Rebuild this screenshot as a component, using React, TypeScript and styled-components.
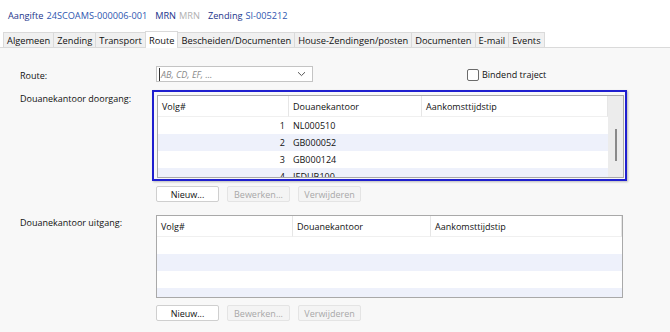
import styled, { createGlobalStyle } from "styled-components";

const GlobalStyle = createGlobalStyle`
  html, body {
    margin: 0;
    padding: 0;
    background: #ffffff;
  }
  body {
    font-family: "Open Sans", "Noto Sans", Arial, sans-serif;
    font-size: 9px;
    color: #1a1a1a;
  }
`;

type Row = { volg: number; kantoor: string };

const DOORGANG: Row[] = [
  { volg: 1, kantoor: "NL000510" },
  { volg: 2, kantoor: "GB000052" },
  { volg: 3, kantoor: "GB000124" },
  { volg: 4, kantoor: "IEDUB100" },
];

const TABS = [
  "Algemeen",
  "Zending",
  "Transport",
  "Route",
  "Bescheiden/Documenten",
  "House-Zendingen/posten",
  "Documenten",
  "E-mail",
  "Events",
];

const ChevronDown = () => (
  <svg width="9" height="6" viewBox="0 0 9 6">
    <path d="M1 1.2 L4.5 4.6 L8 1.2" fill="none" stroke="#555" strokeWidth="1" />
  </svg>
);

type GridProps = {
  rows: Row[];
  columns: string;
  scroll?: boolean;
};

const DataGrid = ({ rows, columns, scroll }: GridProps) => {
  const filled = [...rows];
  while (filled.length < 4) filled.push({ volg: 0, kantoor: "" });
  return (
    <GridFrame>
      <GridBody $columns={columns}>
        <HeadCell>Volg#</HeadCell>
        <HeadCell>Douanekantoor</HeadCell>
        <HeadCell>Aankomsttijdstip</HeadCell>
        {scroll && <ScrollHead />}
        {filled.map((r, i) => (
          <RowGroup key={i}>
            <Cell $alt={i % 2 === 1} $right>
              {r.volg || ""}
            </Cell>
            <Cell $alt={i % 2 === 1}>{r.kantoor}</Cell>
            <Cell $alt={i % 2 === 1} />
          </RowGroup>
        ))}
        {scroll && (
          <ScrollTrack>
            <ScrollThumb />
          </ScrollTrack>
        )}
      </GridBody>
    </GridFrame>
  );
};

const ButtonBar = () => (
  <Buttons>
    <Button>Nieuw...</Button>
    <Button disabled>Bewerken...</Button>
    <Button disabled>Verwijderen</Button>
  </Buttons>
);

export default function App() {
  return (
    <Page>
      <GlobalStyle />
      <TopBar>
        <Key>Aangifte</Key>
        <Val>24SCOAMS-000006-001</Val>
        <Spacer />
        <Key>MRN</Key>
        <Val $muted>MRN</Val>
        <Spacer />
        <Key>Zending</Key>
        <Val>SI-005212</Val>
      </TopBar>
      <TabStrip>
        {TABS.map((t) => (
          <Tab key={t} $active={t === "Route"}>
            {t}
          </Tab>
        ))}
      </TabStrip>
      <Content>
        <FormRow $top={18}>
          <Label>Route:</Label>
          <Combo>
            <Placeholder>AB, CD, EF, ...</Placeholder>
            <ChevronDown />
          </Combo>
          <CheckLabel>
            <CheckBox />
            Bindend traject
          </CheckLabel>
        </FormRow>
        <FormRow $top={8}>
          <Label $pad={2}>Douanekantoor doorgang:</Label>
          <Stack $gap={5}>
            <FocusRing>
              <DataGrid rows={DOORGANG} columns="131px 133px 1fr 15px" scroll />
            </FocusRing>
            <ButtonBar />
          </Stack>
        </FormRow>
        <FormRow $top={13}>
          <Label $pad={1}>Douanekantoor uitgang:</Label>
          <Stack $gap={7}>
            <DataGrid rows={[]} columns="136px 138px 1fr" />
            <ButtonBar />
          </Stack>
        </FormRow>
      </Content>
    </Page>
  );
}

const Page = styled.div`
  width: 670px;
  height: 332px;
  overflow: hidden;
  display: flex;
  flex-direction: column;
`;

const TopBar = styled.div`
  height: 30px;
  display: flex;
  align-items: center;
  gap: 3px;
  padding: 0 0 0 8px;
  font-size: 9.2px;
`;

const Key = styled.span`
  color: #23358c;
`;

const Val = styled.span<{ $muted?: boolean }>`
  color: ${(p) => (p.$muted ? "#b0b0b0" : "#2e56b0")};
`;

const Spacer = styled.span`
  width: 2px;
`;

const TabStrip = styled.div`
  display: flex;
  align-items: flex-end;
  height: 17px;
  padding-left: 3px;
  border-bottom: 1px solid #dadada;
`;

const Tab = styled.div<{ $active?: boolean }>`
  height: ${(p) => (p.$active ? 17 : 15)}px;
  box-sizing: border-box;
  padding: 0 3px;
  display: flex;
  align-items: center;
  font-size: 9.3px;
  color: #111;
  background: ${(p) => (p.$active ? "#ffffff" : "#f0f0f0")};
  border: 1px solid #dadada;
  border-bottom: none;
  margin-bottom: ${(p) => (p.$active ? -1 : 0)}px;
  margin-right: -1px;
`;

const Content = styled.div`
  flex: 1;
  background: #f8f8f8;
  display: flex;
  flex-direction: column;
`;

const FormRow = styled.div<{ $top: number }>`
  display: flex;
  align-items: flex-start;
  margin-top: ${(p) => p.$top}px;
`;

const Label = styled.div<{ $pad?: number }>`
  width: 136px;
  padding-left: 20px;
  padding-top: ${(p) => p.$pad ?? 3}px;
  font-size: 9px;
  color: #111;
  flex-shrink: 0;
`;

const Combo = styled.div`
  width: 157px;
  height: 16px;
  box-sizing: border-box;
  border: 1px solid #c4c4c4;
  background: #fff;
  display: flex;
  align-items: center;
  justify-content: space-between;
  padding: 0 6px 0 2px;
`;

const Placeholder = styled.span`
  font-style: italic;
  color: #8a8a8a;
  font-size: 9px;
  border-left: 1px solid #333;
  padding-left: 1px;
`;

const CheckLabel = styled.label`
  margin-left: 154px;
  margin-top: 2px;
  display: flex;
  align-items: center;
  gap: 3px;
  font-size: 9px;
  color: #111;
`;

const CheckBox = styled.span`
  width: 10px;
  height: 10px;
  border: 1px solid #6b6b6b;
  border-radius: 2px;
  background: #fff;
`;

const Stack = styled.div<{ $gap: number }>`
  display: flex;
  flex-direction: column;
  gap: ${(p) => p.$gap}px;
`;

const FocusRing = styled.div`
  margin-left: -4px;
  border: 2px solid #1f1fcf;
  padding: 3px 1px 1px 3px;
  box-shadow: 1px 1px 2px rgba(0, 0, 0, 0.25);
  width: 467px;
`;

const GridFrame = styled.div`
  width: 467px;
  height: 83px;
  box-sizing: border-box;
  border: 1px solid #a9a9a9;
  background: #fff;
  overflow: hidden;
`;

const GridBody = styled.div<{ $columns: string }>`
  display: grid;
  grid-template-columns: ${(p) => p.$columns};
  grid-template-rows: 21px repeat(4, 17px);
`;

const HeadCell = styled.div`
  display: flex;
  align-items: center;
  padding-left: 4px;
  font-size: 9px;
  color: #111;
  background: #fff;
  border-right: 1px solid #e6e6e6;
  border-bottom: 1px solid #f0f0f0;
`;

const ScrollHead = styled.div`
  background: #ececec;
`;

const RowGroup = styled.div`
  display: contents;
`;

const Cell = styled.div<{ $alt?: boolean; $right?: boolean }>`
  display: flex;
  align-items: center;
  justify-content: ${(p) => (p.$right ? "flex-end" : "flex-start")};
  padding: 0 4px;
  font-size: 9px;
  color: #111;
  background: ${(p) => (p.$alt ? "#eef1fb" : "#ffffff")};
`;

const ScrollTrack = styled.div`
  grid-column: 4;
  grid-row: 2 / span 4;
  background: #ececec;
  display: flex;
  justify-content: center;
  padding-top: 12px;
`;

const ScrollThumb = styled.div`
  width: 2px;
  height: 32px;
  background: #8a8a8a;
`;

const Buttons = styled.div`
  display: flex;
  gap: 8px;
`;

const Button = styled.button`
  width: 63px;
  height: 16px;
  padding: 0;
  font-family: inherit;
  font-size: 9px;
  color: ${(p) => (p.disabled ? "#a8a8a8" : "#111")};
  background: ${(p) => (p.disabled ? "#f4f4f4" : "#ffffff")};
  border: 1px solid ${(p) => (p.disabled ? "#e4e4e4" : "#cfcfcf")};
  border-radius: 2px;
`;
